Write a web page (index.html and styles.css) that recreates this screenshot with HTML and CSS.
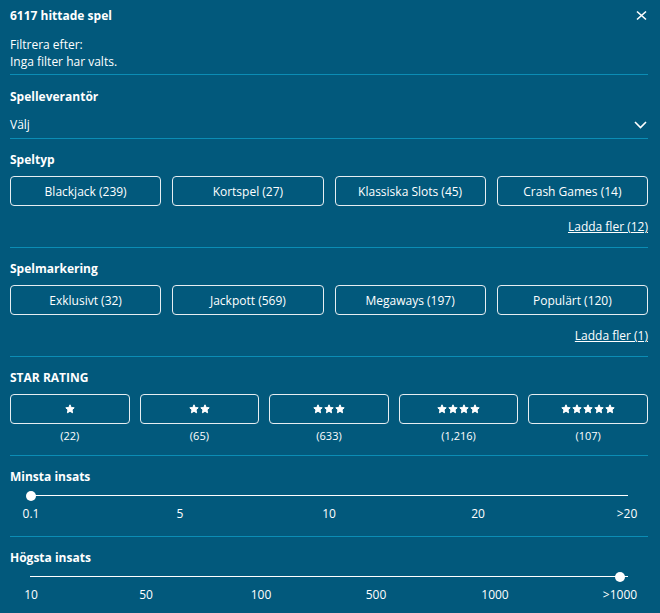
FILE: index.html
```html
<!DOCTYPE html>
<html>
<head>
    <link rel="stylesheet" href="styles.css">
</head>
<body>
    <svg width="0" height="0" style="position: absolute;">
        <symbol id="star" viewBox="0 0 10 10">
            <path d="M5 0.8 L6.2 3.5 L9.2 3.8 L7 5.8 L7.6 8.8 L5 7.3 L2.4 8.8 L3 5.8 L0.8 3.8 L3.8 3.5 Z" fill="#fff" stroke="#fff" stroke-width="1" stroke-linejoin="round"/>
        </symbol>
    </svg>

    <div class="panel">

        <div class="section header">
            <div class="header-top">
                <h2>6117 hittade spel</h2>
                <button class="close" aria-label="Stäng">
                    <svg width="11" height="11" viewBox="0 0 11 11">
                        <path d="M1 1.5 L10 9.5 M10 1.5 L1 9.5" stroke="#fff" stroke-width="1.6" fill="none"/>
                    </svg>
                </button>
            </div>
            <p class="filter-info">Filtrera efter:<br>Inga filter har valts.</p>
        </div>

        <div class="section provider">
            <h3>Spelleverantör</h3>
            <div class="select">
                <span>Välj</span>
                <svg width="13" height="8" viewBox="0 0 13 8">
                    <path d="M1 1 L6.5 6.5 L12 1" stroke="#fff" stroke-width="1.6" fill="none"/>
                </svg>
            </div>
        </div>

        <div class="section">
            <h3>Speltyp</h3>
            <div class="chips">
                <button class="chip">Blackjack (239)</button>
                <button class="chip">Kortspel (27)</button>
                <button class="chip">Klassiska Slots (45)</button>
                <button class="chip">Crash Games (14)</button>
            </div>
            <div class="more"><a href="#">Ladda fler (12)</a></div>
        </div>

        <div class="section">
            <h3>Spelmarkering</h3>
            <div class="chips">
                <button class="chip">Exklusivt (32)</button>
                <button class="chip">Jackpott (569)</button>
                <button class="chip">Megaways (197)</button>
                <button class="chip">Populärt (120)</button>
            </div>
            <div class="more"><a href="#">Ladda fler (1)</a></div>
        </div>

        <div class="section stars-section">
            <h3>STAR RATING</h3>
            <div class="ratings">
                <div class="rating">
                    <button class="chip"><svg><use href="#star"/></svg></button>
                    <span class="count">(22)</span>
                </div>
                <div class="rating">
                    <button class="chip"><svg><use href="#star"/></svg><svg><use href="#star"/></svg></button>
                    <span class="count">(65)</span>
                </div>
                <div class="rating">
                    <button class="chip"><svg><use href="#star"/></svg><svg><use href="#star"/></svg><svg><use href="#star"/></svg></button>
                    <span class="count">(633)</span>
                </div>
                <div class="rating">
                    <button class="chip"><svg><use href="#star"/></svg><svg><use href="#star"/></svg><svg><use href="#star"/></svg><svg><use href="#star"/></svg></button>
                    <span class="count">(1,216)</span>
                </div>
                <div class="rating">
                    <button class="chip"><svg><use href="#star"/></svg><svg><use href="#star"/></svg><svg><use href="#star"/></svg><svg><use href="#star"/></svg><svg><use href="#star"/></svg></button>
                    <span class="count">(107)</span>
                </div>
            </div>
        </div>

        <div class="section slider-section">
            <h3>Minsta insats</h3>
            <div class="track">
                <span class="thumb" style="left: 1px;"></span>
            </div>
            <div class="ticks">
                <span>0.1</span>
                <span>5</span>
                <span>10</span>
                <span>20</span>
                <span>&gt;20</span>
            </div>
        </div>

        <div class="section slider-section last">
            <h3>Högsta insats</h3>
            <div class="track">
                <span class="thumb" style="left: 590px;"></span>
            </div>
            <div class="ticks wide">
                <span>10</span>
                <span>50</span>
                <span>100</span>
                <span>500</span>
                <span>1000</span>
                <span>&gt;1000</span>
            </div>
        </div>

    </div>
</body>
</html>
```

FILE: styles.css
```css
* {
    margin: 0;
    padding: 0;
    box-sizing: border-box;
}

body {
    font-family: 'Open Sans', 'Noto Sans', sans-serif;
    font-size: 12px;
    line-height: 17px;
    color: #fff;
    background-color: #02597c;
}

.panel {
    padding: 0 12px 0 10px;
}

.section {
    padding: 12px 0 12px;
    border-bottom: 1px solid #0b8db5;
}

.section.last {
    border-bottom: none;
}

h2,
h3 {
    font-size: 12px;
    font-weight: 700;
    line-height: 17px;
}

/* header */
.header {
    padding: 7px 0 4px;
}

.header-top {
    display: flex;
    justify-content: space-between;
    align-items: center;
}

.close {
    background: none;
    border: none;
    display: flex;
    margin-right: 1px;
    cursor: pointer;
}

.filter-info {
    margin-top: 12px;
}

/* provider select */
.provider {
    padding: 13px 0 5px;
}

.select {
    display: flex;
    justify-content: space-between;
    align-items: center;
    margin-top: 11px;
    padding-right: 1px;
}

/* chips */
.chips {
    display: grid;
    grid-template-columns: repeat(4, 1fr);
    gap: 11px;
    margin-top: 8px;
}

.chip {
    height: 30px;
    background: transparent;
    border: 1px solid #e6eef2;
    border-radius: 4px;
    color: #fff;
    font-family: inherit;
    font-size: 12px;
    display: flex;
    justify-content: center;
    align-items: center;
    gap: 1px;
    cursor: pointer;
}

.more {
    text-align: right;
    margin-top: 12px;
}

.more a {
    color: #fff;
    text-decoration: underline;
}

/* star rating */
.stars-section {
    padding-bottom: 11px;
}

.ratings {
    display: grid;
    grid-template-columns: repeat(5, 1fr);
    gap: 10px;
    margin-top: 8px;
}

.rating {
    display: flex;
    flex-direction: column;
}

.chip svg {
    width: 10px;
    height: 10px;
}

.count {
    text-align: center;
    font-size: 11px;
    line-height: 16px;
    margin-top: 4px;
}

/* sliders */
.slider-section {
    padding-bottom: 14px;
}

.track {
    position: relative;
    height: 1px;
    background-color: #fff;
    margin: 10px 20px 0;
}

.thumb {
    position: absolute;
    top: -4px;
    width: 10px;
    height: 10px;
    margin-left: -5px;
    border-radius: 50%;
    background-color: #fff;
}

.ticks {
    display: grid;
    grid-template-columns: repeat(4, 1fr) 0;
    margin: 9px 21px 0;
}

.ticks.wide {
    grid-template-columns: 115fr 115fr 115fr 119fr 125fr 0;
    margin-right: 28px;
}

.ticks span {
    width: 0;
    display: flex;
    justify-content: center;
    white-space: nowrap;
}
```
